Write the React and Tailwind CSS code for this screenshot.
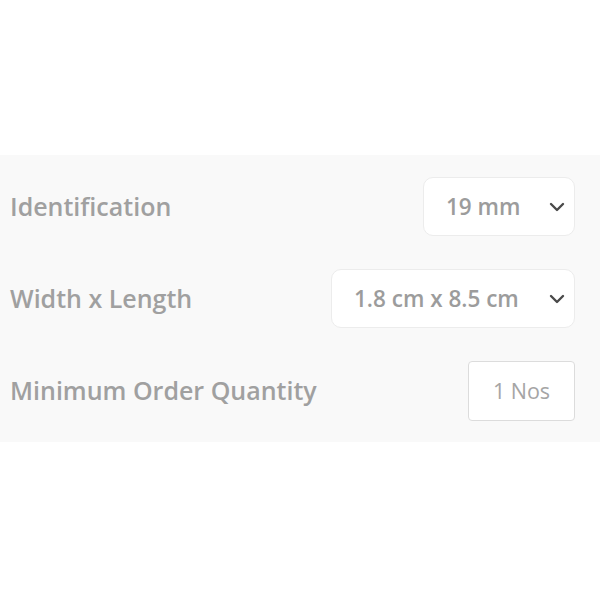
const font = { fontFamily: '"Open Sans", "Liberation Sans", sans-serif' }

function Chevron() {
  return (
    <svg width="16" height="10" viewBox="0 0 16 10" fill="none" className="shrink-0">
      <path d="M2 2 L8 8 L14 2" stroke="#4a4a4a" strokeWidth="2.4" strokeLinecap="round" strokeLinejoin="round" />
    </svg>
  )
}

function SelectBox({ value, width }) {
  return (
    <div className={`flex items-center justify-between h-[59px] ${width} rounded-[10px] border border-[#ececec] bg-white pl-[22px] pr-[9px]`}>
      <span className="text-[22.5px] font-semibold text-[#9c9c9c]">{value}</span>
      <Chevron />
    </div>
  )
}

export default function App() {
  return (
    <div className="w-[600px] h-[600px] bg-white pt-[155px]" style={font}>
      <div className="bg-[#f9f9f9] h-[287px] flex flex-col pl-[10px] pr-[25px] pt-[22px] gap-[33px]">
        <div className="flex items-center justify-between h-[59px]">
          <span className="text-[25px] font-semibold text-[#a0a0a0]">Identification</span>
          <SelectBox value="19 mm" width="w-[152px]" />
        </div>
        <div className="flex items-center justify-between h-[59px]">
          <span className="text-[25px] font-semibold text-[#a0a0a0]">Width x Length</span>
          <SelectBox value="1.8 cm x 8.5 cm" width="w-[244px]" />
        </div>
        <div className="flex items-center justify-between h-[60px]">
          <span className="text-[25px] font-semibold text-[#a0a0a0]">Minimum Order Quantity</span>
          <div className="flex items-center justify-center w-[107px] h-[60px] rounded-[4px] border border-[#dcdcdc] bg-white">
            <span className="text-[21.5px] text-[#a5a5a5]">1 Nos</span>
          </div>
        </div>
      </div>
    </div>
  )
}
